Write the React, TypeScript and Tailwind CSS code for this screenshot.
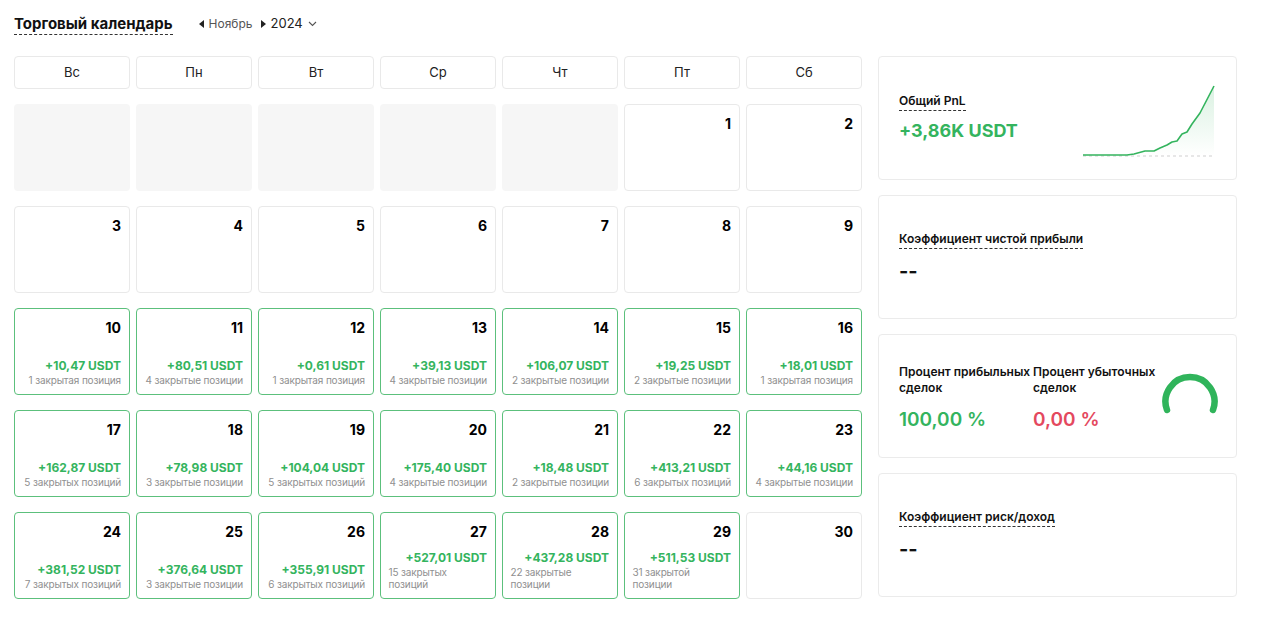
import React from "react";

type Day = {
  day: number;
  pnl?: string;
  trades?: string;
};

const weekDays = ["Вс", "Пн", "Вт", "Ср", "Чт", "Пт", "Сб"];

const days: Day[] = [
  { day: 1 },
  { day: 2 },
  { day: 3 },
  { day: 4 },
  { day: 5 },
  { day: 6 },
  { day: 7 },
  { day: 8 },
  { day: 9 },
  { day: 10, pnl: "+10,47 USDT", trades: "1 закрытая позиция" },
  { day: 11, pnl: "+80,51 USDT", trades: "4 закрытые позиции" },
  { day: 12, pnl: "+0,61 USDT", trades: "1 закрытая позиция" },
  { day: 13, pnl: "+39,13 USDT", trades: "4 закрытые позиции" },
  { day: 14, pnl: "+106,07 USDT", trades: "2 закрытые позиции" },
  { day: 15, pnl: "+19,25 USDT", trades: "2 закрытые позиции" },
  { day: 16, pnl: "+18,01 USDT", trades: "1 закрытая позиция" },
  { day: 17, pnl: "+162,87 USDT", trades: "5 закрытых позиций" },
  { day: 18, pnl: "+78,98 USDT", trades: "3 закрытые позиции" },
  { day: 19, pnl: "+104,04 USDT", trades: "5 закрытых позиций" },
  { day: 20, pnl: "+175,40 USDT", trades: "4 закрытые позиции" },
  { day: 21, pnl: "+18,48 USDT", trades: "2 закрытые позиции" },
  { day: 22, pnl: "+413,21 USDT", trades: "6 закрытых позиций" },
  { day: 23, pnl: "+44,16 USDT", trades: "4 закрытые позиции" },
  { day: 24, pnl: "+381,52 USDT", trades: "7 закрытых позиций" },
  { day: 25, pnl: "+376,64 USDT", trades: "3 закрытые позиции" },
  { day: 26, pnl: "+355,91 USDT", trades: "6 закрытых позиций" },
  { day: 27, pnl: "+527,01 USDT", trades: "15 закрытых позиций" },
  { day: 28, pnl: "+437,28 USDT", trades: "22 закрытые позиции" },
  { day: 29, pnl: "+511,53 USDT", trades: "31 закрытой позиции" },
  { day: 30 },
];

const chartPoints =
  "1,70 45,70 52,69 63,66 72,66 78,63 85,60 90,57 95,56 100,49 105,47 110,39 118,28 132,1";

function DayCell({ item }: { item: Day }) {
  const active = !!item.pnl;
  return (
    <div
      className={`h-[87px] rounded-[4px] border pl-[6px] pr-2 pt-[11px] pb-[8px] flex flex-col items-end ${
        active ? "border-[#5cc07c]" : "border-[#e9e9e9]"
      }`}
    >
      <div className="text-[14px] leading-4 font-bold text-black">{item.day}</div>
      {active && (
        <div className="mt-auto w-full flex flex-col items-end">
          <div className="text-[12px] leading-4 font-bold text-[#34b45e]">{item.pnl}</div>
          <div className="self-stretch flex justify-end">
            <div className="max-w-[98.5px] text-[10px] leading-3 tracking-[-0.15px] text-[#8f8f8f] text-left">
              {item.trades}
            </div>
          </div>
        </div>
      )}
    </div>
  );
}

function Label({ children }: { children: React.ReactNode }) {
  return (
    <span className="text-[12px] leading-4 font-semibold text-[#111] border-b border-dashed border-[#333] pb-[1px]">
      {children}
    </span>
  );
}

function Card({ children }: { children: React.ReactNode }) {
  return (
    <div className="h-[124px] rounded-[4px] border border-[#ebebeb] px-5 flex items-center">
      {children}
    </div>
  );
}

export default function App() {
  return (
    <div
      className="min-h-screen bg-white px-[14px] pt-[13px] text-[#111]"
      style={{ fontFamily: "Inter, 'Noto Sans', sans-serif" }}
    >
      <div className="flex items-center h-[22px]">
        <h1 className="text-[15px] leading-5 font-bold border-b border-dashed border-[#333]">
          Торговый календарь
        </h1>
        <div className="ml-[26px] flex items-center text-[12px]">
          <svg width="5" height="8" viewBox="0 0 5 8" className="mr-[5px]">
            <path d="M5 0 L0 4 L5 8 Z" fill="#222" />
          </svg>
          <span className="text-[#555]">Ноябрь</span>
          <svg width="5" height="8" viewBox="0 0 5 8" className="ml-[8px] mr-[5px]">
            <path d="M0 0 L5 4 L0 8 Z" fill="#222" />
          </svg>
          <span className="text-[13px] text-[#222]">2024</span>
          <svg width="9" height="6" viewBox="0 0 9 6" className="ml-[5px]">
            <path d="M1 1 L4.5 4.5 L8 1" fill="none" stroke="#555" strokeWidth="1.1" />
          </svg>
        </div>
      </div>

      <div className="mt-[21px] flex gap-4">
        <div className="w-[848px] grid grid-cols-7 gap-x-[6px] gap-y-[15px]">
          {weekDays.map((d) => (
            <div
              key={d}
              className="h-[33px] rounded-[4px] border border-[#e9e9e9] flex items-center justify-center text-[13px] text-[#222]"
            >
              {d}
            </div>
          ))}
          {Array.from({ length: 5 }).map((_, i) => (
            <div key={`e${i}`} className="h-[87px] rounded-[4px] bg-[#f6f6f6]" />
          ))}
          {days.map((d) => (
            <DayCell key={d.day} item={d} />
          ))}
        </div>

        <div className="w-[359px] flex flex-col gap-[15px]">
          <Card>
            <div className="flex-1 flex flex-col items-start">
              <Label>Общий PnL</Label>
              <div className="mt-[8px] text-[18px] leading-6 font-bold text-[#34b45e]">
                +3,86K USDT
              </div>
            </div>
            <svg width="134" height="74" viewBox="0 0 134 74" className="mt-[8px]">
              <defs>
                <linearGradient id="pnlFill" x1="0" y1="0" x2="0" y2="1">
                  <stop offset="0%" stopColor="#34b45e" stopOpacity="0.18" />
                  <stop offset="100%" stopColor="#34b45e" stopOpacity="0" />
                </linearGradient>
              </defs>
              <line x1="1" y1="71" x2="132" y2="71" stroke="#cfcfcf" strokeDasharray="3 3" strokeWidth="1" />
              <polygon points={`${chartPoints} 132,71 1,71`} fill="url(#pnlFill)" />
              <polyline points={chartPoints} fill="none" stroke="#34b45e" strokeWidth="1.6" strokeLinejoin="round" />
            </svg>
          </Card>

          <Card>
            <div className="flex flex-col items-start">
              <Label>Коэффициент чистой прибыли</Label>
              <div className="mt-[10px] text-[20px] leading-6 font-bold">--</div>
            </div>
          </Card>

          <Card>
            <div className="flex-1 flex items-start pt-[4px]">
              <div className="w-[134px] pr-[2px]">
                <div className="text-[12px] leading-4 font-semibold">Процент прибыльных сделок</div>
                <div className="mt-[12px] text-[19px] leading-6 font-semibold text-[#34b45e]">
                  100,00 %
                </div>
              </div>
              <div className="w-[124px]">
                <div className="text-[12px] leading-4 font-semibold">Процент убыточных сделок</div>
                <div className="mt-[12px] text-[19px] leading-6 font-semibold text-[#e4495e]">
                  0,00 %
                </div>
              </div>
            </div>
            <svg width="60" height="46" viewBox="0 0 60 46" className="-mr-[4px] -mt-[2px]">
              <path
                d="M7 38 A24.5 24.5 0 1 1 53 38"
                fill="none"
                stroke="#30b45b"
                strokeWidth="6.5"
                strokeLinecap="round"
              />
            </svg>
          </Card>

          <Card>
            <div className="flex flex-col items-start">
              <Label>Коэффициент риск/доход</Label>
              <div className="mt-[10px] text-[20px] leading-6 font-bold">--</div>
            </div>
          </Card>
        </div>
      </div>
    </div>
  );
}
